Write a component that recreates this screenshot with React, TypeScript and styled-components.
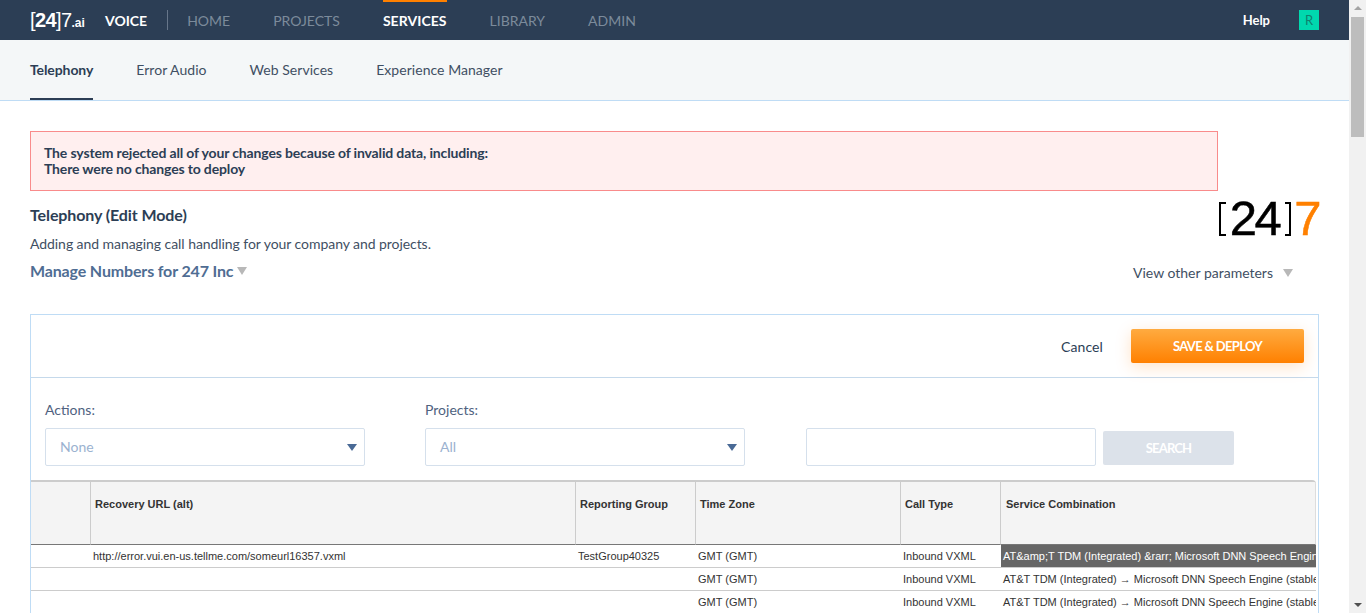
import * as React from 'react';
import styled, { createGlobalStyle } from 'styled-components';

const GlobalStyle = createGlobalStyle`
  html, body {
    margin: 0;
    height: 100%;
    overflow: hidden;
    background: #fff;
  }
  body {
    font-family: Lato, "Open Sans", sans-serif;
    color: #2c3e55;
  }
`;

const navItems = [
  { label: 'HOME' },
  { label: 'PROJECTS' },
  { label: 'SERVICES', active: true },
  { label: 'LIBRARY' },
  { label: 'ADMIN' },
];

const tabs = ['Telephony', 'Error Audio', 'Web Services', 'Experience Manager'];

const combination = 'AT&T TDM (Integrated) \u2192 Microsoft DNN Speech Engine (stable)';

const rows = [
  {
    url: 'http://error.vui.en-us.tellme.com/someurl16357.vxml',
    group: 'TestGroup40325',
    service: 'AT&amp;T TDM (Integrated) &rarr; Microsoft DNN Speech Engine (stable)',
    selected: true,
  },
  { url: '', group: '', service: combination },
  { url: '', group: '', service: combination },
];

const App: React.FC = () => (
  <Page>
    <GlobalStyle />
    <Main>
      <TopBar>
        <BrandLogo>
          [<b>24</b>]7<small>.ai</small>
        </BrandLogo>
        <Product>VOICE</Product>
        <Divider />
        <Nav>
          {navItems.map(item => (
            <NavItem key={item.label} $active={item.active}>
              {item.label}
            </NavItem>
          ))}
        </Nav>
        <Help>Help</Help>
        <Avatar>R</Avatar>
      </TopBar>

      <SubNav>
        {tabs.map((tab, i) => (
          <Tab key={tab} $active={i === 0}>
            {tab}
          </Tab>
        ))}
      </SubNav>

      <Content>
        <Alert>
          The system rejected all of your changes because of invalid data, including:
          <br />
          There were no changes to deploy
        </Alert>

        <Intro>
          <div>
            <Title>Telephony (Edit Mode)</Title>
            <Description>Adding and managing call handling for your company and projects.</Description>
            <Manage>
              Manage Numbers for 247 Inc <Caret />
            </Manage>
          </div>
          <IntroSide>
            <BigLogo aria-label="[24]7">
              <Bracket $side="left" />
              <span>24</span>
              <Bracket $side="right" />
              <Seven>7</Seven>
            </BigLogo>
            <ViewOther>
              View other parameters <Caret />
            </ViewOther>
          </IntroSide>
        </Intro>

        <Panel>
          <ActionBar>
            <CancelLink>Cancel</CancelLink>
            <SaveButton>SAVE &amp; DEPLOY</SaveButton>
          </ActionBar>

          <Filters>
            <Field>
              <FieldLabel>Actions:</FieldLabel>
              <Select>
                None <SelectArrow />
              </Select>
            </Field>
            <Field>
              <FieldLabel>Projects:</FieldLabel>
              <Select>
                All <SelectArrow />
              </Select>
            </Field>
            <SearchInput />
            <SearchButton>SEARCH</SearchButton>
          </Filters>

          <GridTable>
            <colgroup>
              <col width={60} />
              <col width={485} />
              <col width={120} />
              <col width={205} />
              <col width={100} />
              <col width={315} />
            </colgroup>
            <thead>
              <tr>
                <HeadCell />
                <HeadCell>Recovery URL (alt)</HeadCell>
                <HeadCell>Reporting Group</HeadCell>
                <HeadCell>Time Zone</HeadCell>
                <HeadCell>Call Type</HeadCell>
                <HeadCell>Service Combination</HeadCell>
              </tr>
            </thead>
            <tbody>
              {rows.map((row, i) => (
                <tr key={i}>
                  <Cell />
                  <Cell>{row.url}</Cell>
                  <Cell>{row.group}</Cell>
                  <Cell>GMT (GMT)</Cell>
                  <Cell>Inbound VXML</Cell>
                  <Cell $selected={row.selected}>{row.service}</Cell>
                </tr>
              ))}
            </tbody>
          </GridTable>
        </Panel>
      </Content>
    </Main>

    <ScrollTrack>
      <ScrollUp />
      <ScrollThumb />
      <ScrollDown />
    </ScrollTrack>
  </Page>
);

const Page = styled.div`
  display: flex;
  height: 613px;
  overflow: hidden;
`;

const Main = styled.div`
  flex: 1;
  min-width: 0;
`;

const TopBar = styled.header`
  display: flex;
  align-items: center;
  height: 40px;
  padding: 0 30px;
  background: #2c3e55;
`;

const BrandLogo = styled.div`
  width: 75px;
  color: #fff;
  font: 400 20px 'Liberation Sans', sans-serif;
  letter-spacing: -0.6px;

  b {
    font-weight: 700;
  }

  small {
    font-size: 12px;
    font-weight: 700;
    letter-spacing: 0;
  }
`;

const Product = styled.div`
  color: #fff;
  font-size: 14px;
  font-weight: 700;
`;

const Divider = styled.div`
  width: 1px;
  height: 20px;
  margin: 0 19px 0 20px;
  background: #67768a;
`;

const Nav = styled.nav`
  display: flex;
  flex: 1;
  gap: 43px;
  height: 100%;
`;

const NavItem = styled.div<{ $active?: boolean }>`
  display: flex;
  align-items: center;
  height: 100%;
  box-sizing: border-box;
  font-size: 14px;
  font-weight: ${props => (props.$active ? 700 : 400)};
  letter-spacing: ${props => (props.$active ? '0.05px' : '0')};
  color: ${props => (props.$active ? '#fff' : '#7c8b9b')};
  border-top: 2px solid ${props => (props.$active ? '#ff8000' : 'transparent')};
  border-bottom: 2px solid transparent;
`;

const Help = styled.div`
  margin-right: 29px;
  color: #fff;
  font-size: 13px;
  font-weight: 700;
`;

const Avatar = styled.div`
  display: flex;
  align-items: center;
  justify-content: center;
  width: 20px;
  height: 20px;
  background: #00d8ae;
  color: #10806f;
  font-size: 13px;
`;

const SubNav = styled.div`
  display: flex;
  gap: 43px;
  height: 60px;
  padding: 0 30px;
  background: #f4f7f8;
  border-bottom: 1px solid #bfdcf5;
`;

const Tab = styled.div<{ $active?: boolean }>`
  display: flex;
  align-items: center;
  height: 60px;
  box-sizing: border-box;
  font-size: 14px;
  font-weight: ${props => (props.$active ? 700 : 400)};
  letter-spacing: ${props => (props.$active ? '-0.1px' : '0.04px')};
  color: ${props => (props.$active ? '#2c3e55' : '#3f4f63')};
  border-bottom: 2px solid ${props => (props.$active ? '#2c3e55' : 'transparent')};
`;

const Content = styled.main`
  padding: 30px 30px 0;
`;

const Alert = styled.div`
  box-sizing: border-box;
  width: 1188px;
  height: 60px;
  padding: 13px 13px;
  background: #ffefef;
  border: 1px solid #f98b8b;
  font-size: 14px;
  font-weight: 700;
  line-height: 16px;
  letter-spacing: -0.15px;
  color: #2c3e55;
`;

const Intro = styled.div`
  display: flex;
  justify-content: space-between;
  height: 123px;
`;

const Title = styled.h1`
  margin: 14px 0 0;
  font-size: 16px;
  line-height: 20px;
  font-weight: 700;
  letter-spacing: -0.1px;
  color: #2c3e55;
`;

const Description = styled.p`
  margin: 9px 0 0;
  font-size: 14px;
  line-height: 20px;
  letter-spacing: -0.06px;
  color: #3f4f63;
`;

const Manage = styled.div`
  display: flex;
  align-items: center;
  gap: 4px;
  margin-top: 7px;
  font-size: 16px;
  line-height: 20px;
  font-weight: 700;
  letter-spacing: -0.15px;
  color: #4f6d93;
`;

const Caret = styled.span`
  display: inline-block;
  width: 0;
  height: 0;
  border-style: solid;
  border-width: 8px 5px 0;
  border-color: #b8b8b8 transparent transparent;
`;

const IntroSide = styled.div`
  display: flex;
  flex-direction: column;
  align-items: flex-end;
`;

const BigLogo = styled.div`
  display: flex;
  align-items: center;
  margin-top: 9px;
  height: 37px;
  color: #000;
  font: 400 49px/37px 'Liberation Sans', sans-serif;
  letter-spacing: -2.5px;
  -webkit-text-stroke: 0.5px currentColor;
`;

const Bracket = styled.i<{ $side: 'left' | 'right' }>`
  display: block;
  box-sizing: border-box;
  height: 34px;
  width: ${props => (props.$side === 'left' ? '7px' : '6px')};
  margin: ${props => (props.$side === 'left' ? '0 4px 0 0' : '0 3px 0 6px')};
  border: 0 solid #000;
  border-width: 2px 0;
  ${props => (props.$side === 'left' ? 'border-left-width: 2px;' : 'border-right-width: 2px;')}
`;

const Seven = styled.span`
  color: #ff8000;
`;

const ViewOther = styled.div`
  display: flex;
  align-items: center;
  gap: 10px;
  margin: 26px 26px 0 0;
  font-size: 14px;
  line-height: 20px;
  color: #3f4f63;
`;

const Panel = styled.section`
  border: 1px solid #bfdcf5;
`;

const ActionBar = styled.div`
  display: flex;
  align-items: center;
  justify-content: flex-end;
  gap: 28px;
  height: 62px;
  padding-right: 14px;
  border-bottom: 1px solid #c5d9eb;
`;

const CancelLink = styled.a`
  font-size: 14px;
  letter-spacing: 0.1px;
  color: #2c3e55;
`;

const SaveButton = styled.button`
  width: 173px;
  height: 34px;
  border: 0;
  border-radius: 2px;
  background: linear-gradient(#ffab40, #ff8000);
  box-shadow: 0 4px 16px rgba(255, 128, 0, 0.22);
  color: #fff;
  font: 700 13px Lato, sans-serif;
  letter-spacing: -0.65px;
`;

const Filters = styled.div`
  display: flex;
  align-items: flex-end;
  height: 88px;
  padding: 0 14px;
  margin-bottom: 14px;
`;

const Field = styled.div`
  width: 320px;
  margin-right: 60px;
`;

const FieldLabel = styled.div`
  margin-bottom: 9px;
  font-size: 14px;
  line-height: 18px;
  color: #4f6280;
`;

const Select = styled.div`
  position: relative;
  display: flex;
  align-items: center;
  box-sizing: border-box;
  height: 38px;
  padding: 0 0 2px 14px;
  border: 1px solid #d5e0ec;
  border-radius: 2px;
  font-size: 14px;
  color: #9bb2d0;
`;

const SelectArrow = styled.span`
  position: absolute;
  right: 7px;
  top: 15px;
  width: 0;
  height: 0;
  border-style: solid;
  border-width: 7px 5px 0;
  border-color: #4a6a96 transparent transparent;
`;

const SearchInput = styled.div`
  box-sizing: border-box;
  width: 290px;
  height: 38px;
  margin: 0 7px 0 1px;
  border: 1px solid #d5e0ec;
  border-radius: 2px;
`;

const SearchButton = styled.button`
  width: 131px;
  height: 34px;
  margin-bottom: 1px;
  border: 0;
  border-radius: 2px;
  background: #dce2ea;
  color: #fff;
  font: 700 13px Lato, sans-serif;
  letter-spacing: -0.8px;
`;

const GridTable = styled.table`
  width: 1285px;
  table-layout: fixed;
  border-collapse: separate;
  border-spacing: 0;
  border-top: 2px solid #ccc;
  border-top-right-radius: 4px;
  overflow: hidden;
  font-family: 'Liberation Sans', Arial, sans-serif;
  font-size: 11px;
`;

const HeadCell = styled.th`
  box-sizing: border-box;
  height: 63px;
  padding: 16px 5px 0 4px;
  vertical-align: top;
  text-align: left;
  font-weight: 700;
  line-height: 13px;
  color: #333;
  background: #f4f4f4;
  border-right: 1px solid #ccc;
  border-bottom: 1px solid #777;

  &:last-child {
    padding-left: 5px;
    border-right: 1px solid #ddd;
  }
`;

const Cell = styled.td<{ $selected?: boolean }>`
  box-sizing: border-box;
  height: 23px;
  padding: 0 0 0 2px;
  white-space: nowrap;
  overflow: hidden;
  line-height: 22px;
  color: ${props => (props.$selected ? '#fff' : '#333')};
  background: ${props => (props.$selected ? '#666' : '#fff')};
  border-bottom: 1px solid #ccc;
`;

const ScrollTrack = styled.div`
  display: flex;
  flex-direction: column;
  align-items: center;
  width: 17px;
  background: #f1f1f1;
`;

const ScrollThumb = styled.div`
  width: 13px;
  height: 120px;
  margin-top: 7px;
  background: #bdbdbd;
`;

const ScrollUp = styled.span`
  margin-top: 6px;
  width: 0;
  height: 0;
  border-style: solid;
  border-width: 0 4px 4px;
  border-color: transparent transparent #a3a3a3;
`;

const ScrollDown = styled.span`
  margin-top: auto;
  margin-bottom: 6px;
  width: 0;
  height: 0;
  border-style: solid;
  border-width: 4px 4px 0;
  border-color: #505050 transparent transparent;
`;

export default App;
